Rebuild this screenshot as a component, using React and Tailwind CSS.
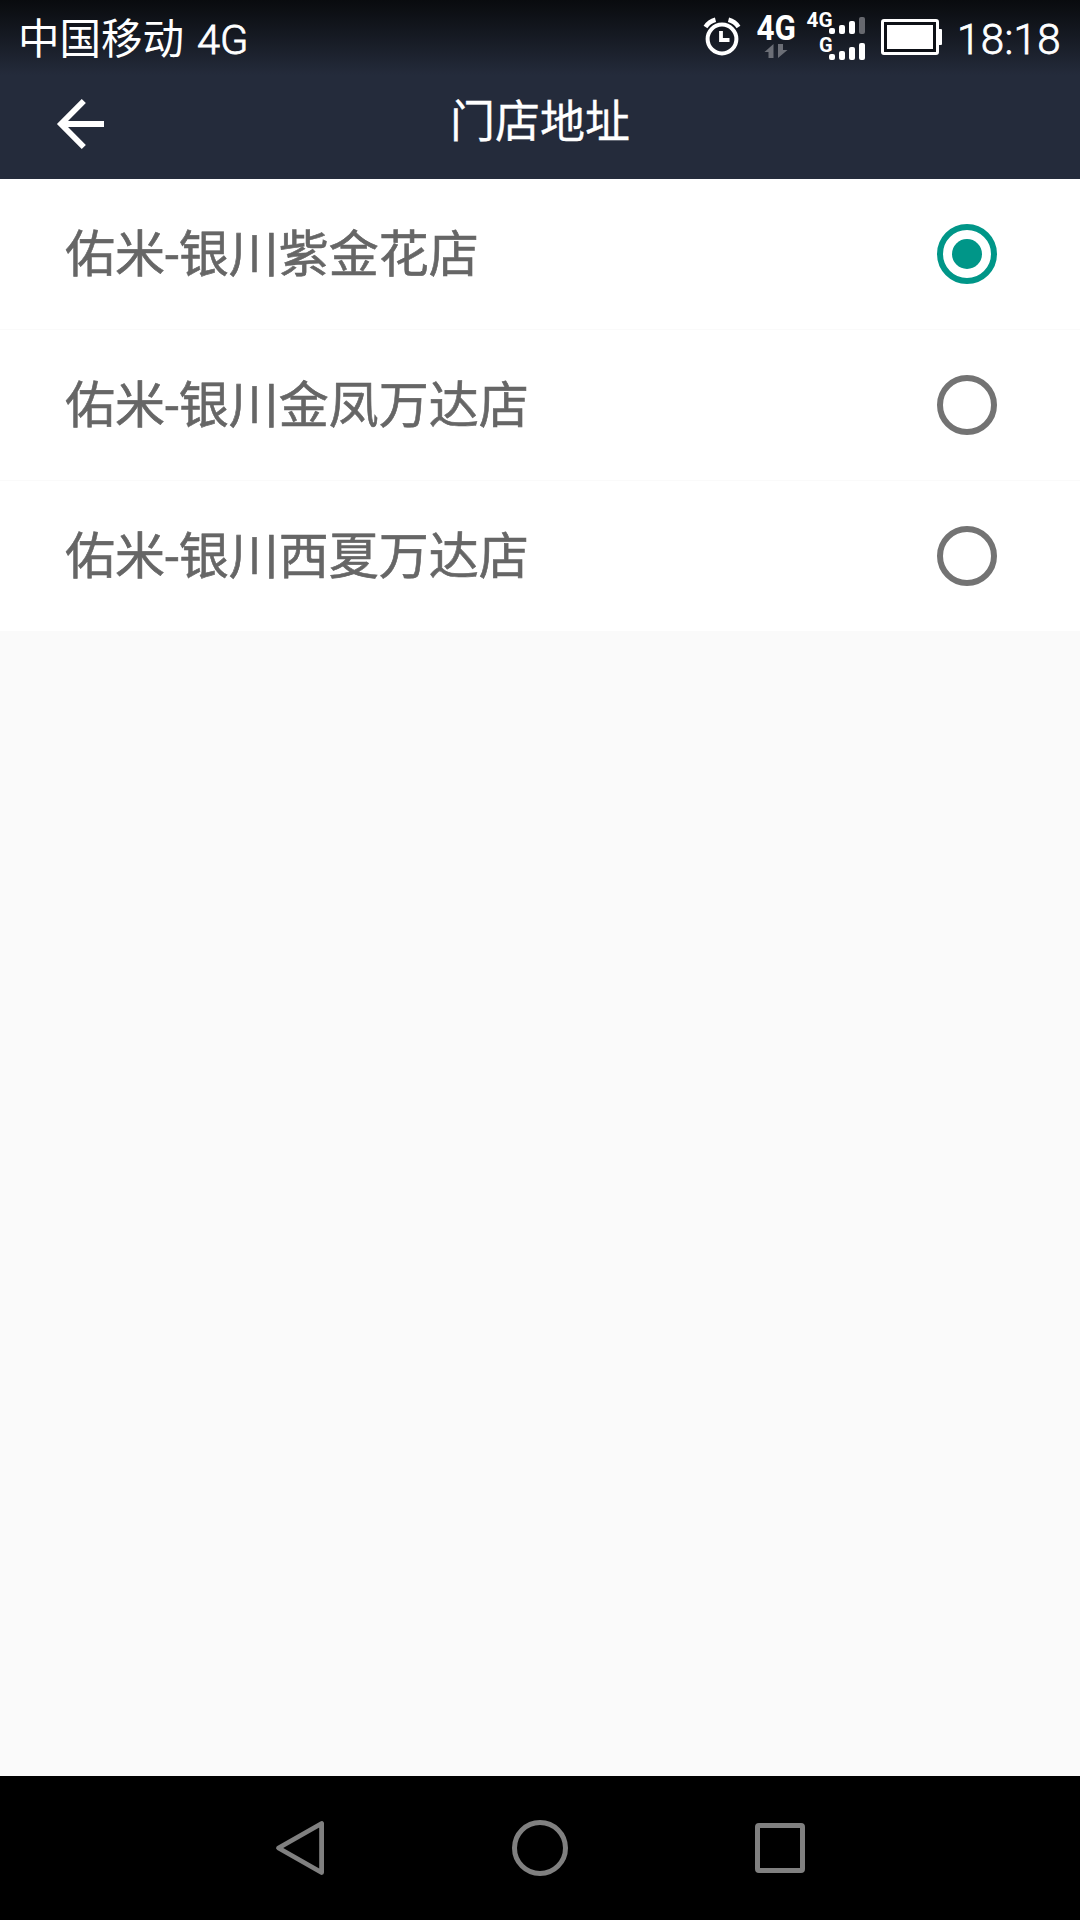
import React, { useState } from 'react';

const stores = [
  { id: 1, name: '佑米-银川紫金花店' },
  { id: 2, name: '佑米-银川金凤万达店' },
  { id: 3, name: '佑米-银川西夏万达店' },
];

function AlarmIcon() {
  return (
    <svg width="38" height="40" viewBox="703 17 38 40" fill="none" stroke="#fff">
      <circle cx="722" cy="39" r="14.4" strokeWidth="4" />
      <path d="M721 31V40H729.5" strokeWidth="3.8" />
      <path d="M705.5 27Q709 21.500 715.500 19.800M738.500 27Q735 21.500 728.500 19.800" strokeWidth="4.500" />
    </svg>
  );
}

function DataIcon() {
  return (
    <svg width="42" height="60" viewBox="755 0 42 60" className="overflow-visible">
      <text x="756.500" y="39.500" textLength="39.500" lengthAdjust="spacingAndGlyphs" fill="#fff" className="font-['Roboto',sans-serif] text-[35px] font-bold">4G</text>
      <path d="M764.500 52L773.500 44V58H768.500V52Z" fill="#6b6e76" />
      <path d="M778 44H783V50H787.500L778 58Z" fill="#6b6e76" />
    </svg>
  );
}

function SignalIcon() {
  return (
    <svg width="60" height="62" viewBox="806 0 60 62" fill="#fff" className="overflow-visible">
      <text x="806.500" y="26.500" textLength="26" lengthAdjust="spacingAndGlyphs" className="font-['Roboto',sans-serif] text-[21px] font-bold">4G</text>
      <text x="819" y="51.500" className="font-['Roboto',sans-serif] text-[20px] font-bold">G</text>
      <rect x="829" y="28" width="6" height="6" rx="2" />
      <rect x="839" y="25" width="6" height="9" rx="2" />
      <rect x="849" y="21" width="6" height="13" rx="2" />
      <rect x="859" y="17" width="6" height="17" rx="2" fill="#66686e" />
      <rect x="829" y="54" width="6" height="6" rx="2" />
      <rect x="839" y="51" width="6" height="9" rx="2" />
      <rect x="849" y="47" width="6" height="13" rx="2" />
      <rect x="859" y="43" width="6" height="17" rx="2" />
    </svg>
  );
}

function BatteryIcon() {
  return (
    <svg width="61" height="36" viewBox="881 19 61 36">
      <rect x="882.500" y="20.500" width="55" height="33" rx="1.500" fill="#0d1016" stroke="#fff" strokeWidth="3" />
      <rect x="887" y="25" width="46" height="24" fill="#fff" />
      <path d="M939 29H941Q942 29 942 30V44Q942 45 941 45H939Z" fill="#fff" />
    </svg>
  );
}

function StatusBar() {
  return (
    <div className="flex h-[75px] items-start justify-between bg-linear-to-b from-[#090b0e] to-[#242b3b] pl-[18px] pr-[18px] text-white">
      <span className="flex items-baseline gap-[13px] pt-[10px] font-['Roboto','Noto_Sans_CJK_SC',sans-serif] text-[41.5px] leading-[60px]">
        <span>中国移动</span>
        <span className="font-light [-webkit-text-stroke:0.8px_white]">4G</span>
      </span>
      <div className="flex items-start">
        <div className="pt-[17px]"><AlarmIcon /></div>
        <div className="ml-[14px]"><DataIcon /></div>
        <div className="ml-[9px]"><SignalIcon /></div>
        <div className="ml-[15px] pt-[19px]"><BatteryIcon /></div>
        <span className="ml-[15px] w-[105px] pt-[10px] font-['Roboto',sans-serif] text-[42px] leading-[60px] font-light tracking-[0.4px] [-webkit-text-stroke:0.8px_white]">18:18</span>
      </div>
    </div>
  );
}

function TitleBar() {
  return (
    <header className="grid h-[104px] grid-cols-[160px_1fr_160px] bg-[#242b3b] text-white">
      <button className="flex items-start pt-[23px] pl-[56px]" aria-label="返回">
        <svg width="50" height="52" viewBox="56 98 50 52" fill="none" stroke="#fff" strokeWidth="5.800">
          <path d="M83.800 101L61 124L83.800 147" />
          <path d="M61 124H104" />
        </svg>
      </button>
      <h1 className="pt-[15px] text-center font-['Roboto','Noto_Sans_CJK_SC',sans-serif] text-[45px] leading-[66px] [-webkit-text-stroke:0.3px_white]">门店地址</h1>
    </header>
  );
}

function StoreRow({ store, checked, onSelect }) {
  return (
    <li
      onClick={onSelect}
      className="flex h-[151px] items-center justify-between border-b border-[#fafafa] bg-white pr-[83px] pl-[65px]"
    >
      <span className="pt-0.5 font-['Roboto','Noto_Sans_CJK_SC',sans-serif] text-[50px] leading-[72px] text-[#666666] [-webkit-text-stroke:0.6px_#666666]">{store.name}</span>
      {checked ? (
        <span className="flex size-[60px] items-center justify-center rounded-full border-6 border-[#009688]">
          <span className="size-[30px] rounded-full bg-[#009688]" />
        </span>
      ) : (
        <span className="size-[60px] rounded-full border-6 border-[#737373]" />
      )}
    </li>
  );
}

function NavBar() {
  return (
    <nav className="grid h-36 grid-cols-[240px_120px_120px_120px_120px_120px_240px] items-center justify-items-center bg-black">
      <svg className="col-start-2" width="60" height="60" viewBox="270 1818 60 60" fill="none" stroke="#808080" strokeWidth="4.800" strokeLinejoin="round">
        <path d="M321.600 1823.500V1872.500L278.500 1848Z" />
      </svg>
      <svg className="col-start-4" width="60" height="60" viewBox="510 1818 60 60" fill="none" stroke="#808080" strokeWidth="5">
        <circle cx="540" cy="1848" r="25.500" />
      </svg>
      <svg className="col-start-6" width="60" height="60" viewBox="750 1818 60 60" fill="none" stroke="#808080" strokeWidth="5">
        <rect x="757.500" y="1825.500" width="45" height="45" rx="1.500" />
      </svg>
    </nav>
  );
}

export default function App() {
  const [selected, setSelected] = useState(1);

  return (
    <div className="flex h-[1920px] w-[1080px] flex-col overflow-hidden bg-[#fafafa]">
      <StatusBar />
      <TitleBar />
      <ul className="flex-1">
        {stores.map((store) => (
          <StoreRow key={store.id} store={store} checked={store.id === selected} onSelect={() => setSelected(store.id)} />
        ))}
      </ul>
      <NavBar />
    </div>
  );
}
